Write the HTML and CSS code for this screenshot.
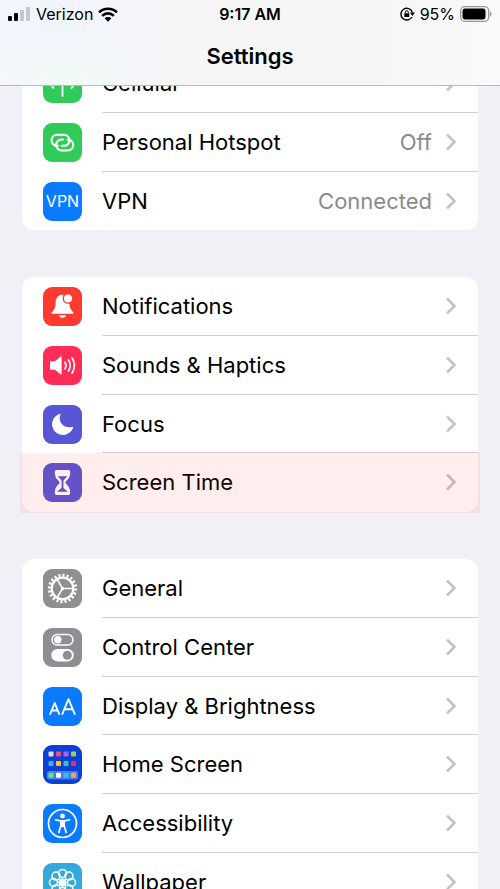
FILE: index.html
```html
<!DOCTYPE html>
<html lang="en">
<head>
<meta charset="utf-8">
<meta name="viewport" content="width=device-width, initial-scale=1">
<title>Settings</title>
<link rel="stylesheet" href="styles.css">
</head>
<body>
<svg class="defs" aria-hidden="true">
  <symbol id="chevron" viewBox="0 0 12 18"><path d="M2 1.500l7.500 7.500L2 16.500" fill="none" stroke="currentColor" stroke-width="2.500"/></symbol>
</svg>

<header class="topbar">
  <div class="status">
    <div class="status-side">
      <svg class="signal" viewBox="0 0 23 14" aria-hidden="true">
        <rect x="0" y="9" width="4" height="5" rx="1"/>
        <rect x="6" y="6" width="4" height="8" rx="1"/>
        <g fill="#c6c7ca"><rect x="12" y="3" width="4" height="11" rx="1"/><rect x="18" y="0" width="4" height="14" rx="1"/></g>
      </svg>
      <span>Verizon</span>
      <svg class="wifi" viewBox="0 0 20 15" aria-hidden="true">
        <g fill="none" stroke="#000" stroke-width="2.600"><path d="M1 5.400a12.800 12.800 0 0 1 18 0"/><path d="M4.200 8.800a8.200 8.200 0 0 1 11.600 0"/></g>
        <path d="M10 14.800l-3.400-3.500a4.800 4.800 0 0 1 6.800 0z"/>
      </svg>
    </div>
    <time class="clock">9:17 AM</time>
    <div class="status-side status-end">
      <svg class="lock" viewBox="0 0 15 14" aria-hidden="true">
        <path d="M12.400 5.200A5.900 5.900 0 1 0 12 10" fill="none" stroke="#000" stroke-width="1.400"/>
        <path d="M9.900 5.400h5L12.500 9z"/>
        <rect x="4.300" y="6.300" width="5" height="3.800" rx=".6"/>
        <path d="M5.300 6.500V5.300a1.500 1.500 0 0 1 3 0v1.200" fill="none" stroke="#000" stroke-width="1"/>
      </svg>
      <span>95%</span>
      <svg class="battery" viewBox="0 0 32 16" aria-hidden="true">
        <rect x=".7" y=".7" width="28" height="14.600" rx="4" fill="none" stroke="#98989a" stroke-width="1.300"/>
        <rect x="2.500" y="2.500" width="23" height="11" rx="2.400"/>
        <path d="M30 5.500c2 .6 2 4.400 0 5z" fill="#98989a"/>
      </svg>
    </div>
  </div>
  <h1 class="title">Settings</h1>
</header>

<main class="content">
  <ul class="group">
    <li class="row"><a href="#cellular">
      <svg class="icon green" viewBox="0 0 39 39" aria-hidden="true"><g fill="none" stroke="#fff" stroke-width="1.800" stroke-linecap="round"><path d="M19.500 17v15M14.500 20.500a6.500 6.500 0 0 1 0-9M24.500 20.500a6.500 6.500 0 0 0 0-9M10.500 24a11.500 11.500 0 0 1 0-16M28.500 24a11.500 11.500 0 0 0 0-16"/></g><circle cx="19.500" cy="16" r="2.500" fill="#fff"/></svg>
      <span class="body"><span class="label">Cellular</span><svg class="chevron"><use href="#chevron"/></svg></span></a></li>
    <li class="row"><a href="#hotspot">
      <svg class="icon green" viewBox="0 0 39 39" aria-hidden="true"><g fill="none" stroke="#fff" stroke-width="2" stroke-linecap="round"><path d="M15 22.800h-1a5.500 5.500 0 0 1 0-11h7a5.500 5.500 0 0 1 0 11h-2.500"/><path d="M24.500 16.800h.5a5.300 5.300 0 0 1 0 10.600h-6.500a5.400 5.400 0 0 1 0-10.800H20"/></g></svg>
      <span class="body"><span class="label">Personal Hotspot</span><span class="value">Off</span><svg class="chevron"><use href="#chevron"/></svg></span></a></li>
    <li class="row"><a href="#vpn">
      <span class="icon blue icon-text" aria-hidden="true">VPN</span>
      <span class="body"><span class="label">VPN</span><span class="value">Connected</span><svg class="chevron"><use href="#chevron"/></svg></span></a></li>
  </ul>

  <ul class="group">
    <li class="row"><a href="#notifications">
      <svg class="icon red" viewBox="0 0 39 39" aria-hidden="true"><path d="M19.500 7.500c-5.500.6-7 5-7 9.500 0 4.500-2 6-3.700 8.300-.5.800-.2 1.500.8 1.500h19.800c1 0 1.300-.7.800-1.500-1.700-2.300-3.700-3.800-3.700-8.300z" fill="#fff"/><path d="M16 28.300h7c-.5 1.700-1.800 2.500-3.500 2.500s-3-.8-3.500-2.500z" fill="#fff"/><circle cx="25" cy="11.500" r="4.700" fill="#fff" stroke="#ff3b30" stroke-width="1.300"/></svg>
      <span class="body"><span class="label">Notifications</span><svg class="chevron"><use href="#chevron"/></svg></span></a></li>
    <li class="row"><a href="#sounds">
      <svg class="icon pink" viewBox="0 0 39 39" aria-hidden="true"><path d="M7 16.200q0-1 1-1h4l5.600-4.600q1-.8 1 .6v16.500q0 1.400-1 .6L12 23.800H8q-1 0-1-1z" fill="#fff"/><g fill="none" stroke="#fff" stroke-width="1.700" stroke-linecap="round"><path d="M22 16.200q2 3.300 0 6.600M25.500 14q3.500 5.500 0 11M29 11.800q5 7.700 0 15.400"/></g></svg>
      <span class="body"><span class="label">Sounds &amp; Haptics</span><svg class="chevron"><use href="#chevron"/></svg></span></a></li>
    <li class="row"><a href="#focus">
      <svg class="icon indigo" viewBox="0 0 39 39" aria-hidden="true"><path d="M16.800 8.800c.5-.2 1 .1.700.7-3.200 7.500 3.800 15 12 12.200.6-.2.900.2.700.7A10.800 10.800 0 1 1 16.800 8.800z" fill="#fff"/></svg>
      <span class="body"><span class="label">Focus</span><svg class="chevron"><use href="#chevron"/></svg></span></a></li>
    <li class="row highlighted"><a href="#screen-time">
      <svg class="icon indigo" viewBox="0 0 39 39" aria-hidden="true"><path d="M13.500 7h12q1.700 0 1.700 1.700c0 5-1.500 7-4 9.300q-1.700 1.500 0 3c2.500 2.300 4 4.300 4 9.300q0 1.700-1.700 1.700h-12q-1.700 0-1.700-1.700c0-5 1.500-7 4-9.300q1.700-1.500 0-3c-2.500-2.300-4-4.300-4-9.300Q11.800 7 13.500 7z" fill="#fff"/><path d="M14.800 13.300h9.400c-.8 1.800-3.800 3-3.800 5v6c0 1.800 3.800 3 4.300 4.500H14.300c.5-1.500 4.300-2.700 4.300-4.500v-6c0-2-3-3.200-3.800-5z" fill="#5856d6"/></svg>
      <span class="body"><span class="label">Screen Time</span><svg class="chevron"><use href="#chevron"/></svg></span></a></li>
  </ul>

  <ul class="group">
    <li class="row"><a href="#general">
      <svg class="icon gray" viewBox="0 0 39 39" aria-hidden="true"><g fill="none" stroke="#fff"><circle cx="19.500" cy="19.500" r="10.800" stroke-width="2.200"/><circle cx="19.500" cy="19.500" r="13.200" stroke-width="3" pathLength="40" stroke-dasharray="1 1"/><path d="M19.500 19.500H30M19.500 19.500l-5.300-9.200M19.500 19.500l-5.300 9.200" stroke-width="1.600"/></g><circle cx="19.500" cy="19.500" r="1.700" fill="#fff"/></svg>
      <span class="body"><span class="label">General</span><svg class="chevron"><use href="#chevron"/></svg></span></a></li>
    <li class="row"><a href="#control-center">
      <svg class="icon gray" viewBox="0 0 39 39" aria-hidden="true"><rect x="9" y="6.500" width="21" height="10.500" rx="5.250" fill="none" stroke="#fff" stroke-width="1.500"/><circle cx="14.800" cy="11.700" r="3.700" fill="#fff"/><rect x="8.300" y="21" width="22.400" height="12.400" rx="6.200" fill="#fff"/><circle cx="24.300" cy="27.200" r="4.500" fill="#8e8e93"/></svg>
      <span class="body"><span class="label">Control Center</span><svg class="chevron"><use href="#chevron"/></svg></span></a></li>
    <li class="row"><a href="#display">
      <svg class="icon blue" viewBox="0 0 39 39" aria-hidden="true"><g fill="none" stroke="#fff" stroke-width="1.900" stroke-linecap="round" stroke-linejoin="round"><path d="M7.200 27l4.500-11 4.500 11M8.700 23.500h6"/><path d="M19.300 27l6.200-14.800L31.700 27M21.300 22.300h8.400"/></g></svg>
      <span class="body"><span class="label">Display &amp; Brightness</span><svg class="chevron"><use href="#chevron"/></svg></span></a></li>
    <li class="row"><a href="#home-screen">
      <svg class="icon navy" viewBox="0 0 39 39" aria-hidden="true">
        <rect x="4" y="26" width="31" height="8.500" rx="2" fill="#4d7ddd"/>
        <rect x="5.500" y="6.500" width="5" height="5" rx="1" fill="#dedfe6"/><rect x="13" y="6.500" width="5" height="5" rx="1" fill="#fb4a78"/><rect x="20.500" y="6.500" width="5" height="5" rx="1" fill="#a964ee"/><rect x="28" y="6.500" width="5" height="5" rx="1" fill="#a5cf52"/>
        <rect x="5.500" y="16" width="5" height="5" rx="1" fill="#35b3f2"/><rect x="13" y="16" width="5" height="5" rx="1" fill="#ffc21f"/><rect x="20.500" y="16" width="5" height="5" rx="1" fill="#27cdc0"/><rect x="28" y="16" width="5" height="5" rx="1" fill="#f5304d"/>
        <rect x="5.500" y="27.700" width="5" height="5" rx="1" fill="#5eea7b"/><rect x="13" y="27.700" width="5" height="5" rx="1" fill="#fff"/><rect x="20.500" y="27.700" width="5" height="5" rx="1" fill="#22c5fb"/><rect x="28" y="27.700" width="5" height="5" rx="1" fill="#fba052"/>
      </svg>
      <span class="body"><span class="label">Home Screen</span><svg class="chevron"><use href="#chevron"/></svg></span></a></li>
    <li class="row"><a href="#accessibility">
      <svg class="icon blue" viewBox="0 0 39 39" aria-hidden="true"><circle cx="19.500" cy="19.500" r="14" fill="none" stroke="#fff" stroke-width="1.700"/><circle cx="19.500" cy="12" r="2.400" fill="#fff"/><path d="M12.500 15.800q3.500 1.200 7 1.200t7-1.200M17.800 17v5l-2 6.500M21.200 17v5l2 6.500" fill="none" stroke="#fff" stroke-width="1.700" stroke-linecap="round" stroke-linejoin="round"/><path d="M17.300 16.500h4.400V23h-4.400z" fill="#fff"/></svg>
      <span class="body"><span class="label">Accessibility</span><svg class="chevron"><use href="#chevron"/></svg></span></a></li>
    <li class="row"><a href="#wallpaper">
      <svg class="icon cyan" viewBox="0 0 39 39" aria-hidden="true"><g fill="none" stroke="#fff" stroke-width="1.500"><circle cx="19.500" cy="10.500" r="4"/><circle cx="25.900" cy="13.100" r="4"/><circle cx="28.500" cy="19.500" r="4"/><circle cx="25.900" cy="25.900" r="4"/><circle cx="19.500" cy="28.500" r="4"/><circle cx="13.100" cy="25.900" r="4"/><circle cx="10.500" cy="19.500" r="4"/><circle cx="13.100" cy="13.100" r="4"/><circle cx="19.500" cy="19.500" r="3"/><path d="M19.500 14.500v10M14.500 19.500h10M16 16l7 7M23 16l-7 7"/></g></svg>
      <span class="body"><span class="label">Wallpaper</span><svg class="chevron"><use href="#chevron"/></svg></span></a></li>
  </ul>
</main>
</body>
</html>
```
FILE: styles.css
```css
* { box-sizing: border-box; }

body {
  margin: 0;
  height: 100vh;
  overflow: hidden;
  background: #f0f0f6;
  color: #000;
  font-family: Inter, "Liberation Sans", sans-serif;
  font-size: 22px;
  line-height: 28px;
}

svg { display: block; flex: none; }
.defs { position: absolute; width: 0; height: 0; }

.topbar {
  position: fixed;
  top: 0;
  left: 0;
  right: 0;
  z-index: 2;
  height: 86px;
  border-bottom: 1px solid #b9b9bc;
  background:
    radial-gradient(circle at 64px 84px, #f1faf5, transparent 70px),
    radial-gradient(circle at 60px 30px, #f0f4fd, transparent 120px),
    linear-gradient(90deg, #f7f8fc, #f6f6f6 35%, #f6f6f6 75%, #f9f9fc);
}

.status {
  display: flex;
  align-items: center;
  height: 28px;
  padding: 0 8px;
  font-size: 16px;
  line-height: 20px;
}
.status-side {
  display: flex;
  flex: 1;
  align-items: center;
  gap: 5px;
}
.status-end { justify-content: flex-end; }
.clock { font-weight: 600; }
.signal { width: 23px; height: 14px; }
.wifi { width: 20px; height: 15px; }
.lock { width: 15px; height: 14px; }
.battery { width: 32px; height: 16px; }

.title {
  margin: 14px 0 0;
  font-size: 22px;
  font-weight: 600;
  line-height: 28px;
  text-align: center;
}

.content {
  height: 100%;
  padding: 54px 22px 0;
  overflow-y: auto;
  scrollbar-width: none;
}

.group {
  margin: 0 0 47px;
  padding: 0;
  border-radius: 12px;
  background: #fff;
  list-style: none;
}

.row { position: relative; height: 59px; }
.row:nth-child(3n) { height: 58px; }
.row a {
  display: flex;
  align-items: center;
  gap: 20px;
  height: 100%;
  padding-left: 21px;
  color: inherit;
  text-decoration: none;
}

.icon {
  flex: none;
  width: 39px;
  height: 39px;
  border-radius: 9px;
}
.icon-text {
  display: flex;
  align-items: center;
  justify-content: center;
  color: #fff;
  font-size: 16px;
}
.green { background: #30cb58; }
.blue { background: #0a7aff; }
.red { background: #ff3b30; }
.pink { background: #ff2d55; }
.indigo { background: #5856d6; }
.gray { background: #8e8e93; }
.navy { background: #0b3fd6; }
.cyan { background: #34aadc; }

.body {
  display: flex;
  flex: 1;
  align-items: center;
  height: 100%;
  padding-right: 21px;
  border-bottom: 1px solid #d0d0d3;
}
.row:last-child .body { border-bottom-color: transparent; }
.label { flex: 1; }
.value { color: #8a8a8d; }
.chevron {
  width: 12px;
  height: 18px;
  margin-left: 13px;
  color: #c2c2c5;
}

.highlighted::after {
  content: "";
  position: absolute;
  inset: 0 -2px -1px;
  background: rgba(255, 40, 30, 0.08);
  pointer-events: none;
}
```
